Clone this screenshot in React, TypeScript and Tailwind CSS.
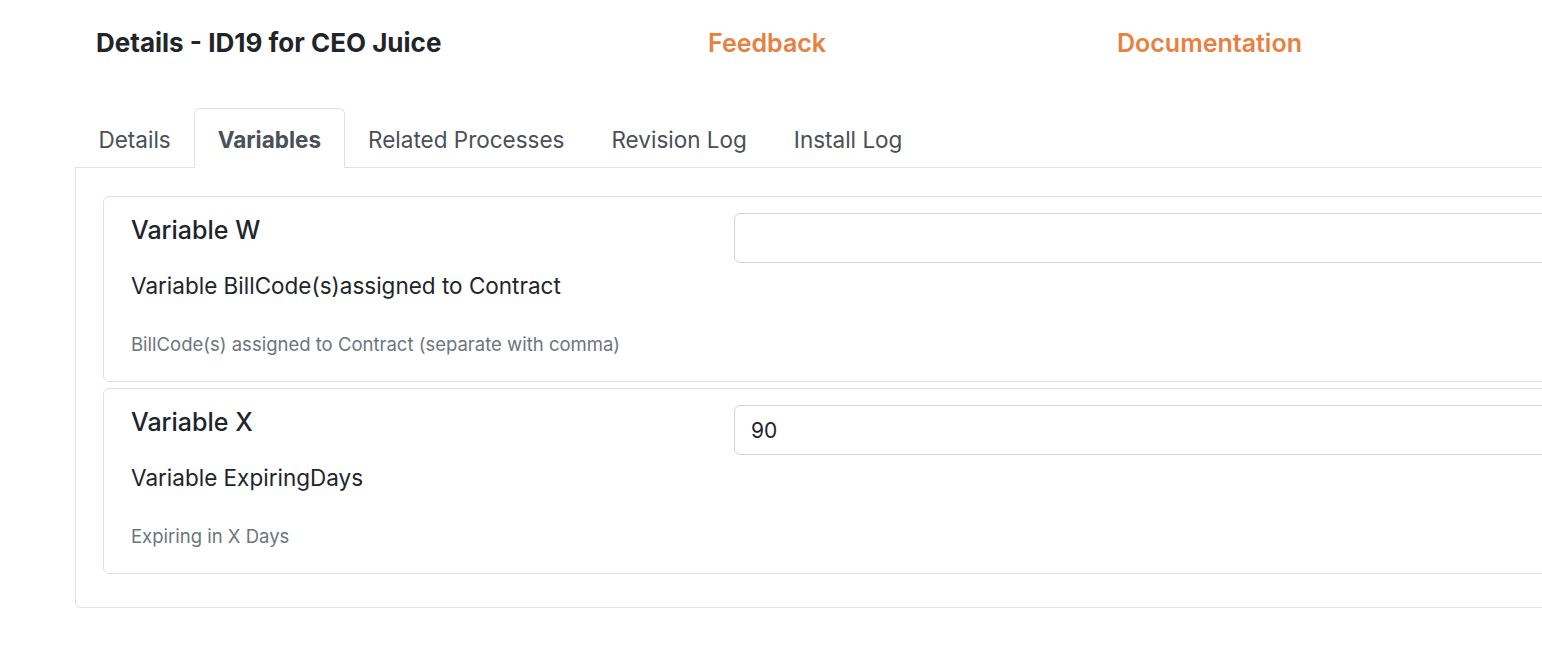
const tabs = ["Details", "Variables", "Related Processes", "Revision Log", "Install Log"];

const variables = [
  {
    name: "Variable W",
    label: "Variable BillCode(s)assigned to Contract",
    help: "BillCode(s) assigned to Contract (separate with comma)",
    value: "",
  },
  {
    name: "Variable X",
    label: "Variable ExpiringDays",
    help: "Expiring in X Days",
    value: "90",
  },
];

export default function App() {
  return (
    <div className="min-h-screen w-full overflow-hidden bg-white text-[#212529] font-['Inter','Liberation_Sans',sans-serif]">
      <header className="flex items-start pt-[28px] pl-[96px] h-[58px] box-content">
        <h1 className="w-[612px] shrink-0 text-[26px] font-bold leading-[30px]">
          Details - ID19 for CEO Juice
        </h1>
        <a className="w-[409px] shrink-0 text-[25px] font-semibold text-[#e8803f] leading-[30px]">Feedback</a>
        <a className="text-[25px] font-semibold text-[#e8803f] leading-[30px]">Documentation</a>
      </header>

      <main className="pt-[22px] pl-[75px]">
        <div className="w-[1520px]">
          <ul className="flex border-b border-[#dee2e6]">
            {tabs.map((t) => (
              <li
                key={t}
                className={
                  t === "Variables"
                    ? "-mb-px px-[22.5px] pt-[3px] h-[60px] flex items-center text-[22.5px] font-bold text-[#495057] border border-[#dee2e6] border-b-white bg-white rounded-t-[6px]"
                    : "-mb-px px-[22.5px] pt-[3px] h-[60px] flex items-center text-[22.5px] text-[#495057] border border-transparent"
                }
              >
                {t}
              </li>
            ))}
          </ul>

          <div className="border border-t-0 border-[#dee2e6] rounded-b-[6px] pt-[28px] pl-[27px] pb-[27px]">
            {variables.map((v) => (
              <div key={v.name} className="mb-[6px] flex border border-[#dee2e6] rounded-[6px] p-4">
                <div className="w-[614px] shrink-0 pl-[11px]">
                  <h4 className="mt-[3px] text-[25px] font-medium leading-[29px]">{v.name}</h4>
                  <h5 className="mt-[29px] text-[22.5px] leading-[24px]">{v.label}</h5>
                  <p className="mt-[34px] mb-[9px] text-[18.5px] leading-[24px] text-[#6c757d]">{v.help}</p>
                </div>
                <div className="flex-1">
                  <input
                    readOnly
                    value={v.value}
                    className="w-full h-[50px] border border-[#ced4da] rounded-[6px] px-4 text-[21px] text-[#212529] outline-none"
                  />
                </div>
              </div>
            ))}
          </div>
        </div>
      </main>
    </div>
  );
}
